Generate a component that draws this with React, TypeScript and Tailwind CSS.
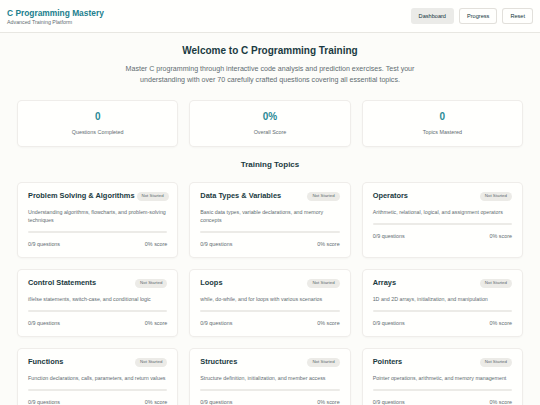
import React from "react";

const topics = [
  { t: "Problem Solving & Algorithms", d: "Understanding algorithms, flowcharts, and problem-solving techniques" },
  { t: "Data Types & Variables", d: "Basic data types, variable declarations, and memory concepts" },
  { t: "Operators", d: "Arithmetic, relational, logical, and assignment operators" },
  { t: "Control Statements", d: "if/else statements, switch-case, and conditional logic" },
  { t: "Loops", d: "while, do-while, and for loops with various scenarios" },
  { t: "Arrays", d: "1D and 2D arrays, initialization, and manipulation" },
  { t: "Functions", d: "Function declarations, calls, parameters, and return values" },
  { t: "Structures", d: "Structure definition, initialization, and member access" },
  { t: "Pointers", d: "Pointer operations, arithmetic, and memory management" },
];

const stats = [
  { v: "0", l: "Questions Completed" },
  { v: "0%", l: "Overall Score" },
  { v: "0", l: "Topics Mastered" },
];

export default function App() {
  return (
    <div className="min-h-[405px] bg-[#fcfcf9] font-['Liberation_Sans',Arial,sans-serif] text-[#13343b]">
      <header className="flex h-[33px] items-center justify-between border-b border-[rgba(94,82,64,0.14)] bg-[#fffffd] pl-[7px] pr-[7px]">
        <div className="flex flex-col">
          <div className="text-[8.4px] font-bold leading-[10px] text-[#21808d]">C Programming Mastery</div>
          <div className="mt-[1px] text-[5.3px] leading-[6px] text-[#626c71]">Advanced Training Platform</div>
        </div>
        <div className="flex items-center gap-[5px]">
          <button className="h-[16px] rounded-[3px] border border-transparent bg-[#ebebe8] px-[7px] text-[5.6px] text-[#13343b]">Dashboard</button>
          <button className="h-[16px] rounded-[3px] border border-[rgba(94,82,64,0.18)] bg-[#fffffd] px-[7px] text-[5.6px] text-[#13343b]">Progress</button>
          <button className="h-[16px] rounded-[3px] border border-[rgba(94,82,64,0.18)] bg-[#fffffd] px-[7px] text-[5.6px] text-[#13343b]">Reset</button>
        </div>
      </header>
      <main className="px-[17px] pt-[12px]">
        <h1 className="text-center text-[10px] font-bold leading-[12px] text-[#1a3a41]">Welcome to C Programming Training</h1>
        <p className="mx-auto mt-[7px] max-w-[300px] text-center text-[7.1px] leading-[11px] text-[#626c71]">
          Master C programming through interactive code analysis and prediction exercises. Test your understanding with over 70 carefully crafted questions covering all essential topics.
        </p>
        <div className="mt-[14px] grid grid-cols-3 gap-[11px]">
          {stats.map((s) => (
            <div key={s.l} className="flex h-[47px] flex-col items-center rounded-[5px] border border-[rgba(94,82,64,0.1)] bg-[#fffffd] pt-[10px] shadow-[0_1px_2px_rgba(0,0,0,0.03)]">
              <div className="text-[10px] font-bold leading-[12px] text-[#2a8a96]">{s.v}</div>
              <div className="mt-[6px] text-[5.4px] leading-[7px] text-[#626c71]">{s.l}</div>
            </div>
          ))}
        </div>
        <h2 className="mt-[13px] text-center text-[8px] font-bold leading-[10px] text-[#1a3a41]">Training Topics</h2>
        <div className="mt-[12px] grid grid-cols-3 gap-[11px]">
          {topics.map((tp) => (
            <div key={tp.t} className="flex flex-col rounded-[5px] border border-[rgba(94,82,64,0.1)] bg-[#fffffd] px-[10px] pb-[9px] pt-[8px] shadow-[0_1px_2px_rgba(0,0,0,0.03)]">
              <div className="flex items-center justify-between gap-[2px]">
                <div className="whitespace-nowrap text-[7.4px] font-bold leading-[10px] text-[#1a3a41]">{tp.t}</div>
                <span className="flex h-[9px] shrink-0 items-center rounded-full bg-[#ecebe7] px-[5px] text-[4.4px] text-[#626c71]">Not Started</span>
              </div>
              <div className="mt-[7px] text-[5.3px] leading-[8px] text-[#626c71]">{tp.d}</div>
              <div className="mt-[6.5px] h-[2.5px] w-full rounded-full bg-[#ecebe7]" />
              <div className="mt-[7px] flex items-center justify-between text-[5.4px] leading-[8px] text-[#626c71]">
                <span>0/9 questions</span>
                <span>0% score</span>
              </div>
            </div>
          ))}
        </div>
        <div className="h-[20px]" />
      </main>
    </div>
  );
}
